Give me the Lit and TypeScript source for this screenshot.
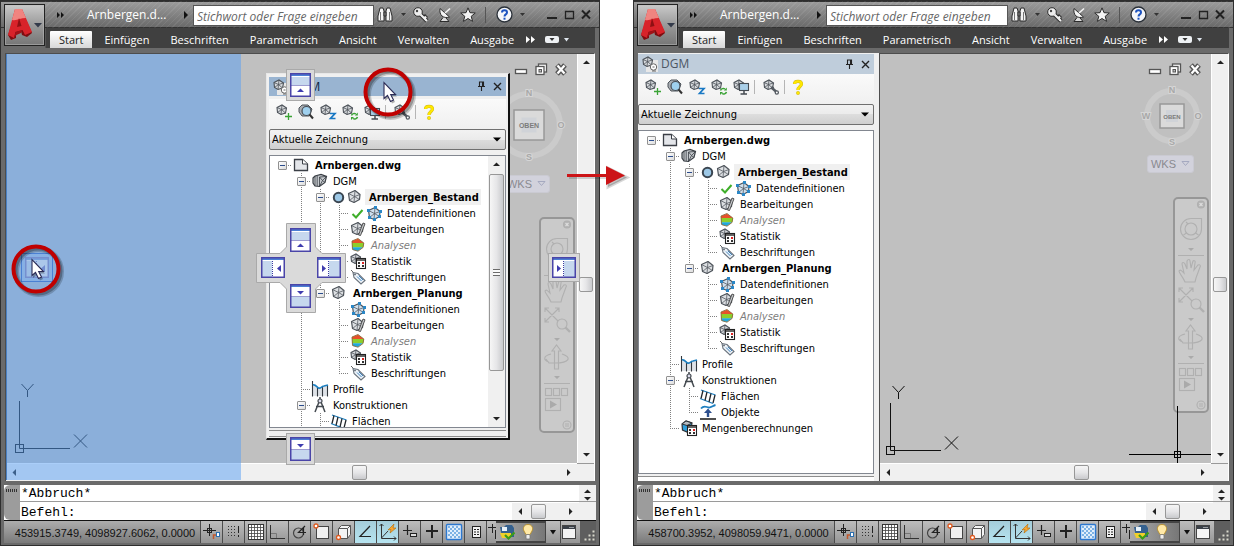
import { LitElement, html, svg, css, nothing } from "lit";
import { customElement, property } from "lit/decorators.js";
import { classMap } from "lit/directives/class-map.js";

/* ---------- icons ---------- */

const svgBox = (w: number, h: number, body: unknown) =>
  html`<svg width=${w} height=${h} viewBox="0 0 ${w} ${h}" aria-hidden="true">${body}</svg>`;

const meshShape = (fill = "#dcdfe2") => svg`
  <path d="M1.5 4.5 L8 1.5 L13 5.5 L12.5 10.5 L7 13.5 L2.5 11.5 Z" fill=${fill} stroke="#4c5259" stroke-width="1.2" stroke-linejoin="round"/>
  <path d="M1.5 4.5 L7.5 7.5 L13 5.5 M8 1.5 L7.5 7.5 L7 13.5 M7.5 7.5 L2.5 11.5 M7.5 7.5 L12.5 10.5" fill="none" stroke="#555b62" stroke-width=".8"/>`;

const smallMesh = svg`
  <path d="M1 3.5 L6 1 L10.5 4 L9.5 9 L5 10.5 L1.5 8.5 Z" fill="#d8dbde" stroke="#4c5259" stroke-width="1.1"/>
  <path d="M1 3.5 L5.5 5.5 L10.5 4 M6 1 L5.5 5.5 L5 10.5 M5.5 5.5 L1.5 8.5 M5.5 5.5 L9.5 9" fill="none" stroke="#4c5259" stroke-width=".8"/>`;

const calcShape = svg`
  <rect x="6.5" y="5.5" width="9" height="10" fill="#fff" stroke="#222" stroke-width="1.1"/>
  <path d="M6.5 7 H15.5" stroke="#222" stroke-width="1.4"/>
  <path d="M8 9 h2 v2 h-2z M8 12 h2 v2 h-2z M12 12 h2 v2 h-2z" fill="#333"/>
  <rect x="12" y="9" width="2" height="2" fill="#d22"/>`;

const treeIcons: Record<string, unknown> = {
  file: svg`<path d="M1.5 2.5 H9.5 L14.5 7 V13.5 H1.5 Z" fill="#e4e6ea" stroke="#3b3f46" stroke-width="1.3"/><path d="M9.5 2.5 V7 H14.5" fill="#fff" stroke="#3b3f46"/>`,
  dgm: svg`<path d="M1 5 L3 3 L9 1.5 L14.5 3.5 L13 9.5 L7.5 13.5 L3 13 L1 10 Z" fill="#c6cace" stroke="#3a3f45" stroke-width="1.2"/>
    <path d="M3 3 V13 M5.2 3 V13 M7.5 4 L14.5 3.5 M7.5 4 L7.5 13.5 M7.5 4 L10.5 7.5 L14.5 3.5 M10.5 7.5 L7.5 13.5 M10.5 7.5 L13 9.5" fill="none" stroke="#3a3f45" stroke-width=".8"/>`,
  mesh: svg`${meshShape()}`,
  data: svg`<g transform="translate(1 1)">${meshShape("#cfe0ee")}</g>
    <path d="M1 4h3v3H1z M8 1h3v3H8z M13 5h3v3h-3z M2 11h3v3H2z M7 13h3v3H7z M12 10h3v3h-3z" fill="#2b87c6"/>`,
  edit: svg`${meshShape()}<path d="M8.5 14 L13 2 L15 2.8 L10.5 14.5 Z" fill="#c6c9cc" stroke="#444" stroke-width=".9"/>`,
  analyse: svg`<path d="M2 4 L8 1.8 L14 6 H2 Z" fill="#e8502a"/><path d="M2 6 H14 V8 L13 10.5 H2 Z" fill="#8ccf2c"/><path d="M2 10.2 H13 L8 14 L3 13 Z" fill="#20a8dc"/>
    <path d="M2 4 L8 1.5 L13.8 6 L13 10.5 L8 14.2 L2.5 12.5 Z" fill="none" stroke="#8a6a3c" stroke-width=".9"/>`,
  stat: svg`${smallMesh}${calcShape}`,
  tag: svg`<path d="M1 1 L4 4" stroke="#666"/><path d="M3 3.5 L8 4.5 L15 11.5 L11 15 L4 8.5 Z" fill="#eef3f8" stroke="#6a737d" stroke-width="1.1"/>
    <path d="M7 7.5 L11.5 12 M8.8 6.8 L13 11" stroke="#3d83bf" stroke-width="1"/><circle cx="5" cy="5.4" r=".9" fill="#59636e"/>`,
  profile: svg`<path d="M1 3 V15 H16 V4 L12 5 L9 7 L5 6 Z" fill="#dfe3e8"/><path d="M.5 0 V15.5 M5.5 6 V15.5 M10.5 6 V15.5 M15.5 4 V15.5" stroke="#33383e" stroke-width="1.1"/>
    <path d="M1 4 C3 3 5 6 6.5 7 C8.5 8 10 5 12 5 L16 4" fill="none" stroke="#1d7fc0" stroke-width="1.6"/>`,
  konstr: svg`<path d="M8 0 V3 M7 5 L3 15 M9 5 L13 15 M4 9.5 H12" fill="none" stroke="#444a50" stroke-width="1.5"/><circle cx="8" cy="4" r="2" fill="#dde" stroke="#444a50" stroke-width="1.2"/>`,
  area: svg`<path d="M1 2 L15.5 7 M0 10.5 L13 15.5" stroke="#1d7fc0" stroke-width="1.3"/><path d="M3 2.5 L1 10.5 M7 4 L5 12.5 M11 5.5 L9 14 M15 7 L13 15" stroke="#22272c" stroke-width="1.3"/>`,
  object: svg`<path d="M1 4.5 C4 1 6 3 8.5 3.5 C11 4 13 1.5 15.5 1" fill="none" stroke="#1d7fc0" stroke-width="1.8"/>
    <path d="M8 4.5 L12 9 H9.2 V13 H6.8 V9 H4 Z" fill="#2d4f8e"/><path d="M0 15 H16" stroke="#222" stroke-width="1.6"/>`,
  volume: svg`<path d="M1 4 L5 1 L11 3 L10 9 L6 12 L1.5 10 Z" fill="#2f9fdc" stroke="#2e3338" stroke-width="1.2"/><path d="M1 4 L6 5.5 L11 3 L5 1 Z" fill="#b7bbc0" stroke="#2e3338"/>${calcShape}`,
};

const tool: Record<string, unknown> = {
  add: svg`${smallMesh}<path d="M12.5 9 V16 M9 12.5 H16" stroke="#3aa335" stroke-width="1.3"/>`,
  find: svg`<path d="M1 4 L4 1 L10 1 L14 5 L11 12 L4 12 L1 8 Z" fill="#a9adb2" stroke="#4c5259"/><circle cx="8.5" cy="7" r="4.5" fill="#9fd0ee" stroke="#454b52" stroke-width="1.2"/><path d="M11.5 10.5 L15 14.5" stroke="#333" stroke-width="2"/>`,
  zoomz: svg`${smallMesh}<path d="M10 9.5 H15 L10.5 14.5 H15.5" fill="none" stroke="#1878c4" stroke-width="1.7"/>`,
  refresh: svg`${smallMesh}<path d="M9.5 11.5 A3 3 0 0 1 14 10 M15.5 13 A3 3 0 0 1 11 14.5" fill="none" stroke="#3aa335" stroke-width="1.5"/><path d="M15.8 8.5 V11.5 H12.8Z M9 16 V13 H12Z" fill="#3aa335"/>`,
  screen: svg`${smallMesh}<rect x="6.5" y="4.5" width="9" height="7" fill="#a9cfe8" stroke="#454b52" stroke-width="1.1"/><path d="M11 12 V14.5 M7.5 15 H14" stroke="#454b52" stroke-width="1.5"/>`,
  wrench: svg`${smallMesh}<path d="M9 9 L13.5 13" stroke="#555b62" stroke-width="2.4"/><circle cx="13.8" cy="13.5" r="1.6" fill="#fff" stroke="#555b62" stroke-width="1.3"/><circle cx="9.5" cy="8.8" r="1.6" fill="#555b62"/>`,
  help: svg`<path d="M4.5 5 C4.5 1.5 11.5 1.5 11.5 5 C11.5 7.5 8 7.5 8 11" fill="none" stroke="#c9b21a" stroke-width="3.2"/><path d="M4.5 5 C4.5 1.5 11.5 1.5 11.5 5 C11.5 7.5 8 7.5 8 11" fill="none" stroke="#ffe800" stroke-width="2.4"/><circle cx="8" cy="14" r="1.7" fill="#ffe800" stroke="#c9b21a" stroke-width=".5"/>`,
};

const arrowTri = (dir: string, color = "#222") => {
  const d = { up: "M0 5 L3.5 1.5 L7 5Z", down: "M0 2 L7 2 L3.5 5.5Z", left: "M5 0 L1.5 3.5 L5 7Z", right: "M2 0 L5.5 3.5 L2 7Z" }[dir];
  return svgBox(7, 7, svg`<path d=${d} fill=${color}/>`);
};

/* ---------- tree model ---------- */

interface Row {
  cells: string[];
  icon: string;
  text: string;
  kind?: "bold" | "italic";
  lead?: "radio" | "check";
  selected?: boolean;
}

const leaves = (guide: string, checked: boolean): Row[] => {
  const items: [string, string][] = [
    ["data", "Datendefinitionen"],
    ["edit", "Bearbeitungen"],
    ["analyse", "Analysen"],
    ["stat", "Statistik"],
    ["tag", "Beschriftungen"],
  ];
  return items.map(([icon, text], i) => ({
    cells: ["", "v", guide, i === items.length - 1 ? "elbow" : "tee"],
    icon,
    text,
    kind: icon === "analyse" ? "italic" : undefined,
    lead: checked && i === 0 ? "check" : undefined,
  }));
};

const ROWS: Row[] = [
  { cells: ["root open"], icon: "file", text: "Arnbergen.dwg", kind: "bold" },
  { cells: ["", "tee open"], icon: "dgm", text: "DGM" },
  { cells: ["", "v", "tee open"], icon: "mesh", text: "Arnbergen_Bestand", kind: "bold", lead: "radio", selected: true },
  ...leaves("v", true),
  { cells: ["", "v", "elbow open"], icon: "mesh", text: "Arnbergen_Planung", kind: "bold" },
  ...leaves("", false),
  { cells: ["", "tee"], icon: "profile", text: "Profile" },
  { cells: ["", "tee open"], icon: "konstr", text: "Konstruktionen" },
  { cells: ["", "v", "tee"], icon: "area", text: "Flächen" },
  { cells: ["", "v", "elbow"], icon: "object", text: "Objekte" },
  { cells: ["", "elbow"], icon: "volume", text: "Mengenberechnungen" },
];

/* Rows that fit in the floating palette's viewport. */
const FLOATING_ROWS = 17;

const reset = css`
  *, *::before, *::after { box-sizing: border-box; }
  button { font: inherit; color: inherit; background: none; border: 0; padding: 0; margin: 0; display: flex; align-items: center; justify-content: center; }
  svg { display: block; flex: none; overflow: visible; }
`;

/* ---------- scroll bar ---------- */

@customElement("scroll-bar")
class ScrollBar extends LitElement {
  @property({ reflect: true }) orient = "vertical";
  @property({ type: Boolean }) grip = false;
  static styles = [reset, css`
    :host { display: grid; background: #f0f0f0; min-width: 0; min-height: 0; }
    :host([orient="vertical"]) { grid-template-rows: 17px var(--before, 1fr) var(--thumb, 15px) var(--after, 1fr) 17px; width: 17px; }
    :host([orient="horizontal"]) { grid-template-columns: 17px var(--before, 1fr) var(--thumb, 15px) var(--after, 1fr) 17px; height: 17px; }
    .thumb { border: 1px solid #979797; border-radius: 2px; display: grid; place-items: center; }
    :host([orient="vertical"]) .thumb { background: linear-gradient(90deg, #f6f6f6, #e6e6e8 50%, #c9cacd); margin: 0 1px; }
    :host([orient="horizontal"]) .thumb { background: linear-gradient(#f6f6f6, #e6e6e8 50%, #c9cacd); margin: 1px 0; }
    .lines { width: 7px; height: 7px; background: repeating-linear-gradient(#6b6b6b 0 1px, #fafafa 1px 3px); }
  `];
  render() {
    const v = this.orient === "vertical";
    return html`
      <button aria-label="Zurück">${arrowTri(v ? "up" : "left")}</button><span></span>
      <div class="thumb">${this.grip ? html`<div class="lines"></div>` : nothing}</div><span></span>
      <button aria-label="Weiter">${arrowTri(v ? "down" : "right")}</button>`;
  }
}

/* ---------- palette ---------- */

@customElement("dgm-palette")
class DgmPalette extends LitElement {
  @property({ type: Boolean, reflect: true }) floating = false;
  static styles = [reset, css`
    :host { display: flex; flex-direction: column; min-height: 0; background: #f0f0f0; font: 11px/16px "DejaVu Sans Condensed", "DejaVu Sans", sans-serif; color: #000; }
    header { display: flex; align-items: center; height: 20px; background: #bfcddb; color: #4c5664; padding: 0 1px 0 4px; font: 12px/18px "Open Sans", sans-serif; }
    header .name { flex: 1; padding-left: 3px; }
    header button { width: 16px; height: 17px; }
    .tools { display: flex; align-items: center; height: 30px; padding: 0 0 4px 7px; gap: 6px; background: linear-gradient(#fafafa, #f0f0f0); }
    .tools button { width: 16px; height: 16px; }
    .tools i { width: 1px; height: 14px; background: #b5b5b5; margin: 0 -1px; }
    .tools i + button { margin-left: 3px; }
    .tools button:last-child { margin-left: 0; }
    .pick { display: grid; height: 21px; align-items: center; margin-bottom: 5px; }
    .pick > * { grid-area: 1 / 1; }
    select { appearance: none; width: 100%; height: 21px; font: inherit; color: inherit; padding: 1px 20px 0 2px; margin: 0; border: 1px solid #707070; border-radius: 2px; background: linear-gradient(#f2f2f2, #ebebeb 50%, #dddddd 50%, #cfcfcf); }
    .pick span { justify-self: end; padding-right: 5px; pointer-events: none; }
    .box { flex: 1; min-height: 0; display: flex; background: #fff; border: 1px solid #828790; overflow: hidden; }
    ul { list-style: none; margin: 0; padding: 1px 0 0 3px; flex: 1; min-width: 0; }
    li { display: flex; height: 16px; align-items: center; white-space: nowrap; }
    .cell { flex: none; width: 19px; height: 16px; display: grid; place-items: center start; padding-left: 5px;
      --v: repeating-linear-gradient(#808080 0 1px, transparent 1px 2px); --h: repeating-linear-gradient(90deg, #808080 0 1px, transparent 1px 2px); background-repeat: no-repeat; }
    .v { background-image: var(--v); background-size: 1px 16px; background-position: 9px 0; }
    .tee { background-image: var(--v), var(--h); background-size: 1px 16px, 10px 1px; background-position: 9px 0, 9px 8px; }
    .elbow { background-image: var(--v), var(--h); background-size: 1px 8px, 10px 1px; background-position: 9px 0, 9px 8px; }
    .root { background-image: var(--h); background-size: 10px 1px; background-position: 9px 8px; }
    .toggle { width: 9px; height: 9px; border: 1px solid #919191; border-radius: 1px; background: linear-gradient(135deg, #fff, #dcdcdc); }
    .toggle::before { content: ""; width: 5px; height: 1px; background: #2b4c8c; }
    .icon { margin-left: 1px; }
    .label { height: 16px; margin-left: 2px; padding: 1px 2px 0 3px; line-height: 15px; }
    .lead { margin: 0 1px 0 2px; }
    .bold { font-weight: 700; padding-left: 4px; }
    .italic { font-style: italic; color: #7d7d7d; }
    .selected { background: #f0f0f0; }
    scroll-bar { --before: 1px; --thumb: 197px; --after: 1fr; }
    .foot { flex: none; height: 5px; border-top: 1px solid #8d8d8d; background: #fdfdfd; margin-top: 2px; }
    :host([floating]) { border: solid; border-width: 1px 2px 2px 1px; border-color: #e8e8e8 #111 #111 #e8e8e8; padding: 3px 2px 1px; }
    :host([floating]) header { background: #99b4d1; color: #10233c; height: 19px; margin-bottom: 3px; }
    :host([floating]) .foot { height: 7px; background: #f0f0f0; border: solid #8d8d8d; border-width: 1px 0; }
  `];
  private row(r: Row) {
    return html`<li role="treeitem">
      ${r.cells.map((c) => html`<span class="cell ${c.replace("open", "")}">${c.includes("open") ? html`<button class="toggle" aria-label="Zuklappen"></button>` : nothing}</span>`)}
      ${r.lead === "radio" ? html`<span class="lead">${svgBox(13, 13, svg`<circle cx="6.5" cy="6.5" r="4.7" fill="#9dc8e6" stroke="#3b4651" stroke-width="2"/>`)}</span>` : nothing}
      ${r.lead === "check" ? html`<span class="lead">${svgBox(13, 13, svg`<path d="M1.5 7 L5 10.5 L11.5 3" fill="none" stroke="#3fae2a" stroke-width="2"/>`)}</span>` : nothing}
      <span class="icon">${svgBox(16, 16, treeIcons[r.icon])}</span>
      <span class=${classMap({ label: true, bold: r.kind === "bold", italic: r.kind === "italic", selected: !!r.selected })}>${r.text}</span>
    </li>`;
  }
  render() {
    const t = (k: string, name: string) => html`<button aria-label=${name}>${svgBox(16, 16, tool[k])}</button>`;
    const rows = this.floating ? ROWS.slice(0, FLOATING_ROWS) : ROWS;
    return html`
      <header>
        ${svgBox(16, 16, svg`<rect x="4" y="4" width="12" height="12" fill="#e8e8e8"/>${smallMesh}<circle cx="11.5" cy="11" r="3.2" fill="#fff" stroke="#666"/><path d="M10 15 h4 M10.5 11 h2" stroke="#666"/>`)}
        <span class="name">DGM</span>
        <button aria-label="Anheften">${svgBox(9, 11, svg`<path d="M2.5 5.5 V1 H6.5 V5.5 M5.5 1 V5.5 M1 5.5 H8 M4.5 6 V10" fill="none" stroke="#222" stroke-width="1.1"/>`)}</button>
        <button aria-label="Schließen">${svgBox(9, 9, svg`<path d="M1 1 L8 8 M8 1 L1 8" stroke="#222" stroke-width="1.4"/>`)}</button>
      </header>
      <div class="tools">
        ${t("add", "Neu")}${t("find", "Suchen")}${t("zoomz", "Zoom")}${t("refresh", "Aktualisieren")}${t("screen", "Anzeigen")}<i></i>${t("wrench", "Einstellungen")}<i></i>${t("help", "Hilfe")}
      </div>
      <div class="pick">
        <select aria-label="Zeichnung"><option>Aktuelle Zeichnung</option></select>
        <span>${svgBox(8, 5, svg`<path d="M0 .5 H8 L4 4.5Z" fill="#000"/>`)}</span>
      </div>
      <div class="box">
        <ul role="tree">${rows.map((r) => this.row(r))}</ul>
        ${this.floating ? html`<scroll-bar grip></scroll-bar>` : nothing}
      </div>
      <div class="foot"></div>`;
  }
}

/* ---------- application window ---------- */

const statusIcons = [
  svg`<path d="M8.5 3 V15 M2 9.5 H15" stroke="#222"/><rect x="6.5" y="7.5" width="4" height="4" fill="none" stroke="#222"/><path d="M12.5 18 V14 H15" fill="none" stroke="#c1572b" stroke-width="1.5"/><rect x="15.5" y="11.5" width="3" height="4" fill="#fff" stroke="#2b6fb0"/>`,
  svg`<path d="M5 5.5h9 M5 8.5h9 M5 11.5h9 M5 14.5h9" stroke="#333" stroke-dasharray="1 2"/><path d="M15.5 5 V12 M15.5 14 V16" stroke="#222"/>`,
  svg`<rect x="3.5" y="3.5" width="15" height="15" fill="#fff" stroke="#333"/><path d="M6.5 4v14 M9.5 4v14 M12.5 4v14 M15.5 4v14 M4 6.5h14 M4 9.5h14 M4 12.5h14 M4 15.5h14" stroke="#444" stroke-width=".8"/>`,
  svg`<path d="M3.5 4 V17.5 H18" fill="none" stroke="#333"/><path d="M4 12.5 H9.5 V17" fill="none" stroke="#777"/>`,
  svg`<circle cx="9.5" cy="12" r="5" fill="none" stroke="#444" stroke-width="1.2"/><path d="M16 5 L9.5 11.5 H17 M14.5 7 V14" fill="none" stroke="#222" stroke-width="1.2"/>`,
  svg`<rect x="5.5" y="5.5" width="12" height="12" fill="#f1f1f1" stroke="#444"/><circle cx="5" cy="5" r="2" fill="#fff" stroke="#e05a1f" stroke-width="1.3"/>`,
  svg`<path d="M5.5 7.5 L8.5 4.5 H17.5 V13.5 L14.5 17.5 H5.5 Z" fill="#f4f4f4" stroke="#555"/><path d="M5.5 7.5 H14.5 V17.5 M14.5 7.5 L17.5 4.5" fill="none" stroke="#555"/><circle cx="5.5" cy="16.5" r="2" fill="#fff" stroke="#e05a1f" stroke-width="1.3"/>`,
  svg`<path d="M15 5 L5 15.5 H16" fill="none" stroke="#222" stroke-width="1.2"/>`,
  svg`<path d="M4.5 3 V17.5 H19 M4.5 17 L11 10 M2.5 5 L4.5 3 L6.5 5 M17 15.5 L19 17.5 L17 19.5" fill="none" stroke="#333"/><path d="M11 9 L17 3 L16 7 L19 7 L13 12 L14 8.5Z" fill="#f7a531" stroke="#b66a00" stroke-width=".6"/>`,
  svg`<path d="M8.5 4 V14 M4 9.5 H13" stroke="#222" stroke-width="1.2"/><rect x="11.5" y="12.5" width="6" height="3" fill="#ddd" stroke="#222"/>`,
  svg`<path d="M11 4 V17 M5 10 H17" stroke="#222" stroke-width="2"/>`,
  svg`<rect x="3.5" y="3.5" width="15" height="15" rx="1" fill="#e2effc" stroke="#2c78d0" stroke-width="1.4"/><path d="M5 6h12 M5 10h12 M5 14h12" stroke="#7db2e4" stroke-width="2" stroke-dasharray="2 2"/><path d="M7 8h10 M7 12h10 M7 16h10" stroke="#7db2e4" stroke-width="2" stroke-dasharray="2 2"/>`,
  svg`<rect x="7.5" y="5.5" width="8" height="11" fill="#f2f2f2" stroke="#222"/><path d="M9 8.5h2 M9 11h2 M9 13.5h2 M12 8.5h2 M12 11h2 M12 13.5h2" stroke="#222"/>`,
];

const TABS = ["Start", "Einfügen", "Beschriften", "Parametrisch", "Ansicht", "Verwalten", "Ausgabe"];

@customElement("cad-window")
class CadWindow extends LitElement {
  @property({ type: Boolean, reflect: true }) docked = false;
  @property() coords = "";
  static styles = [reset, css`
    :host { position: relative; display: grid; grid-template-rows: 47px 1fr 35px 23px; min-width: 0; border: 1px solid #2e2e2e; background: #6a6a6a; padding-bottom: 2px; font: 11px/16px "Open Sans", sans-serif; }
    .top { display: grid; grid-template: 27px 20px / 44px 1fr; background: linear-gradient(#333 0 1px, #9b9b9b 1px, #6a6a6a 26px, #333 26px 27px, #6a6a6a 27px); }
    .app { grid-row: 1 / 3; margin: 3px 0 2px 3px; width: 41px; border: 1px solid #222; background: linear-gradient(#c9c9c9, #9a9a9a 50%, #767676); box-shadow: inset 0 0 0 1px #bdbdbd80; gap: 2px; }
    .title { display: flex; align-items: center; padding: 0 7px 0 12px; color: #fff; min-width: 0; background: repeating-linear-gradient(135deg, #ffffff12 0 1px, transparent 1px 4px); }
    .name { width: 77px; margin-left: 23px; white-space: nowrap; font-size: 12px; }
    .play { margin: 0 5px 0 20px; }
    input { flex: 1; min-width: 0; height: 21px; margin: 1px 2px 0 0; padding: 3px 0 0 3px; border: 1px solid #555; background: #fff; font: italic 12px/16px "Open Sans", sans-serif; color: #555; }
    input::placeholder { color: #666; opacity: 1; }
    .title button { height: 20px; }
    .binoc { width: 18px; } .caret { width: 19px; } .key { width: 16px; } .dish { width: 16px; margin: 0 7px 0 8px; } .star { width: 16px; }
    .sep { width: 1px; height: 16px; background: #555; margin: 0 9px; }
    .help { width: 18px; } .mini { width: 12px; margin-left: 5px; } .title .first { margin-left: 14px; }
    nav { display: flex; align-items: end; background: #404040; margin-right: 4px; padding-left: 4px; color: #fff; min-width: 0; overflow: hidden; border-left: 1px solid #555; }
    nav a { color: inherit; text-decoration: none; height: 17px; line-height: 17px; padding: 0 10px; margin-right: 1px; white-space: nowrap; }
    nav a.on { background: linear-gradient(#fff, #d8d8d8); color: #222; padding: 0 9px; margin-right: 2px; border-radius: 1px 1px 0 0; }
    nav button { height: 17px; }
    nav .more { margin: 0 10px 0 1px; } nav .pill { margin-right: 5px; }

    .doc { display: grid; grid-template-columns: 1fr; margin: 5px 4px 4px; min-height: 0; background: #f0f0f0; }
    :host([docked]) .doc { grid-template-columns: 241px 1fr; }
    dgm-palette.side { padding: 1px 5px 0 0; }
    .view { display: grid; grid-template: 1fr 18px / 1fr 17px; border: solid #4d4d4d; border-width: 1px 0 0 1px; border-right: 1px solid #fff; min-width: 0; }
    .canvas { position: relative; background: #c0c0c0; overflow: hidden; }
    .view scroll-bar { border: 0 solid #fff; }
    .view scroll-bar[orient="vertical"] { --before: 207fr; --after: 154fr; border-left-width: 1px; }
    .view scroll-bar[orient="horizontal"] { --before: 330fr; --after: 193fr; height: 18px; border-top-width: 1px; }
    :host([docked]) .view scroll-bar[orient="horizontal"] { --before: 176fr; --after: 105fr; }
    .corner { border-top: 1px solid #999; }

    .mdi { position: absolute; right: 10px; top: 9px; display: flex; gap: 7px; }
    .compass { position: absolute; right: 8px; top: 31px; }
    .ucs { position: absolute; left: 8px; bottom: 8px; }
    .wks { position: absolute; right: 27px; top: 121px; width: 47px; height: 18px; border-radius: 3px; background: #d2d2dc; border: 1px solid #cacad2; color: #8a8a90; font: 11px/16px "Liberation Sans", sans-serif; gap: 5px; }
    .bar { position: absolute; right: 2px; top: 163px; }
    .cross { position: absolute; right: 0; bottom: 0; }
    :host([docked]) .compass { right: 7px; top: 30px; }
    :host([docked]) .wks { right: 17px; top: 101px; }
    :host([docked]) .bar { top: 143px; }
    :host([docked]) .ucs { left: 5px; bottom: 6px; }

    .cmd { display: grid; grid-template: 17px 18px / 16px 1fr 67px 17px; margin: 0 3px; background: #fff; font: 13px/17px "Liberation Mono", monospace; color: #000; }
    .grip { grid-row: 1 / 3; background: #9c9c9c; border-radius: 6px 0 0 6px; padding: 4px 0 0 2px; }
    .dots { width: 12px; height: 3px; background: repeating-linear-gradient(90deg, #333 0 1px, transparent 1px 2px); }
    .line { padding-left: 1px; line-height: 21px; }
    .line.first { grid-column: 2 / 4; border-bottom: 1px solid #9a9a9a; line-height: 17px; }
    .spin { background: #f0f0f0; display: flex; flex-direction: column; align-items: center; justify-content: space-between; padding: 3px 0 0; overflow: hidden; border-bottom: 1px solid #9a9a9a; }
    .cmd scroll-bar { height: 17px; margin-top: 1px; --before: 2px; --thumb: 15px; --after: 1fr; }
    .rest { background: #f0f0f0; }

    .status { display: flex; margin: 0 3px; border-top: 1px solid #111; background: linear-gradient(#adadad, #7a7a7a); color: #111; font: 11px/24px "Liberation Sans", sans-serif; min-width: 0; overflow: hidden; }
    .coord { flex: 1; min-width: 0; text-align: center; padding-left: 6px; white-space: nowrap; }
    .status button { width: 22px; height: 22px; border-left: 1px solid #4c4c4c; background: linear-gradient(#bdbdbd, #969696); flex: none; }
    .status button.on { background: linear-gradient(#a5cdda, #b6e4f0); }
    .status .cut { width: 10px; overflow: hidden; justify-content: start; }
    .tray { width: 50px; display: flex; align-items: center; padding-left: 3px; gap: 7px; background: linear-gradient(90deg, #aaa, #777); border: solid #444; border-width: 2px 1px 2px 0; }
    .status .drop { width: 14px; border-left: 0; } .status .win { width: 20px; padding-right: 3px; }
    .corner-grip { width: 16px; background: #5e5e5e; display: flex; align-items: end; justify-content: end; padding: 0 1px 2px 0; }
  `];

  private viewTools() {
    const r = this.docked ? 26 : 32, c = this.docked ? 32 : 40, b = this.docked ? 24 : 30;
    const letter = (x: number, y: number, t: string) => svg`<text x=${x} y=${y + 3} text-anchor="middle" font-family="Liberation Sans" font-size="9" font-weight="700" fill="#a8a8a8" stroke="#d6d6d6" stroke-width="2" paint-order="stroke">${t}</text>`;
    return html`
      <div class="mdi">
        ${svgBox(14, 13, svg`<rect x="1.5" y="6.5" width="11" height="4" fill="#fff" stroke="#555" stroke-width="1.3"/>`)}
        ${svgBox(13, 13, svg`<rect x="3.5" y="1" width="8" height="8" fill="#fff" stroke="#555" stroke-width="1.3"/><rect x="1" y="3.5" width="8" height="8" fill="#fff" stroke="#555" stroke-width="1.3"/><rect x="4" y="6.5" width="2.5" height="2.5" fill="#c0c0c0" stroke="#555"/>`)}
        ${svgBox(12, 13, svg`<path d="M2 2 L10 11 M10 2 L2 11" stroke="#555" stroke-width="5"/><path d="M2.5 2.5 L9.5 10.5 M9.5 2.5 L2.5 10.5" stroke="#fff" stroke-width="2.2"/>`)}
      </div>
      <div class="compass">${svgBox(c * 2, c * 2, svg`
        <circle cx=${c} cy=${c} r=${r - 1} fill="none" stroke="#cbcbcb" stroke-width="6"/>
        ${letter(c, c - r, "N")}${letter(c + r, c, "O")}${letter(c, c + r, "S")}${letter(c - r, c, "W")}
        <rect x=${c - b / 2} y=${c - b / 2} width=${b} height=${b} fill="#dadada" stroke="#989898" stroke-width="1.5"/>
        <rect x=${c - b / 4} y=${c - b / 4} width=${b / 2} height=${b / 2} fill="#d0d3d8"/>
        <text x=${c} y=${c + 3} text-anchor="middle" font-family="Liberation Sans" font-size=${this.docked ? 6 : 7} font-weight="700" fill="#7c7c7c">OBEN</text>`)}</div>
      <button class="wks">WKS ${svgBox(9, 6, svg`<path d="M1 .5 H8 L4.5 4.5Z" fill="none" stroke="#a5a9c0"/>`)}</button>
      <div class="bar">${svgBox(36, 216, svg`
        <rect x="1" y="1" width="34" height="214" rx="4" fill="#cacaca" stroke="#979797" stroke-width="2"/>
        <g fill="none" stroke="#b0b0b0" stroke-width="1.1">
          <circle cx="28" cy="7.5" r="3.5" fill="#b4b4b4"/><path d="M26.5 6 l3 3 m0 -3 l-3 3" stroke="#ddd"/>
          <path d="M18 21.5 H28.5 V32 A10.5 10.5 0 1 1 18 21.5Z"/><circle cx="18" cy="32" r="6"/><path d="M10.5 38 l3-2 M22.5 36 l3 2 M13 25 l2 2"/>
          <path d="M5 58.5 H31 M5 166.5 H31"/>
          <path d="M12 85 C10 80 6 76 6 74 C7 72 9 74 11 76 L9 67 C9 65 11 65 12 67 L14 72 L14 64 C15 62 17 62 17 64 L18 71 L20 64 C21 63 23 64 22 66 L21 73 L25 68 C27 67 28 69 27 70 L23 81 L22 85Z"/>
          <path d="M6 91 L20 105 M20 91 L6 105 M6 95 V91 H10 M16 91 H20 V95 M6 101 V105 H10"/><circle cx="23" cy="107" r="5" fill="#cacaca"/><path d="M26.5 110.5 L31 115" stroke-width="2.4"/>
          <path d="M15.5 152 V134 H13 L17.5 128 L22 134 H19.5 V152Z"/><path d="M12 137 C4 139 4 143 10 145 M23 137 C33 140 31 146 16 146 M7 142 L10 146 L15 146"/>
          <rect x="6.5" y="171.5" width="6" height="7"/><rect x="14.5" y="171.5" width="6" height="7"/><rect x="22.5" y="171.5" width="6" height="7"/>
          <rect x="6.5" y="181.5" width="15" height="12"/><circle cx="28" cy="208" r="4"/><path d="M26 207h4 M26 209h4"/>
        </g>
        <path d="M15 51 h6 l-3 3z M15 121 h6 l-3 3z M15 159 h6 l-3 3z M11 183.5 L18 187.5 L11 191.5Z" fill="#aaa"/>`)}</div>
      <div class="ucs">${svgBox(76, 74, svg`<g fill="none" stroke="#111" stroke-width="1">
        <path d="M5.5 20 V67.5 H56"/><rect x="1.5" y="63.5" width="8" height="8"/><path d="M7.5 3 L13.5 9.5 L19.5 3 M13.5 9.5 V16 M60 53.5 L73 66.5 M73 53.5 L60 66.5"/></g>`)}</div>
      ${this.docked ? html`<div class="cross">${svgBox(82, 57, svg`<path d="M48.5 0 V57 M0 48.5 H82" stroke="#000"/><rect x="45.5" y="45.5" width="6" height="6" fill="none" stroke="#000"/>`)}</div>` : nothing}`;
  }

  render() {
    return html`
      <div class="top">
        <button class="app" aria-label="Anwendungsmenü">
          ${svgBox(25, 34, svg`<path d="M4 32 L1 27 L9 3 L15 3 L25 25 L20 29 L15 27 L14 23 L9 26 L9 30 Z" fill="#7d0d10"/>
            <path d="M1 27 L8 1 H15 L25 24 L18 27 L15.5 22 L8.5 24 L7 30 Z" fill="#d8232a"/><path d="M8 1 H15 L19 10 C13 10 10 13 5 12 Z" fill="#f08480"/><path d="M12 10 L14.5 18 L10 19 Z" fill="#8e1013"/><path d="M7 30 L8.5 24 L15.5 22 L14 25 L9.5 27 Z" fill="#a01217"/>`)}
          ${svgBox(8, 5, svg`<path d="M0 0 H8 L4 4.5Z" fill="#333a4a"/>`)}
        </button>
        <div class="title">
          ${svgBox(7, 6, svg`<path d="M0 0 L3 3 L0 6Z M4 0 L7 3 L4 6Z" fill="#111"/>`)}
          <span class="name">Arnbergen.d...</span>
          <span class="play">${svgBox(4, 8, svg`<path d="M0 0 L4 4 L0 8Z" fill="#111"/>`)}</span>
          <input aria-label="Suche" placeholder="Stichwort oder Frage eingeben">
          <button class="binoc" aria-label="Suchen">${svgBox(16, 15, svg`<path d="M3 1 H6 L7 4 V14 H1 V9 Z M10 1 H13 L15 9 V14 H9 V4 Z M7 5 H9 V9 H7Z" fill="#f4f4f4" stroke="#2c2c2c"/><path d="M3.5 5 V13 M12.5 5 V13" stroke="#777"/>`)}</button>
          <button class="caret" aria-label="Mehr">${svgBox(5, 3, svg`<path d="M0 0 H5 L2.5 3Z" fill="#333"/>`)}</button>
          <button class="key" aria-label="Subscription">${svgBox(16, 16, svg`<path d="M7.5 7.5 L14 14 M11 11 L13.5 8.5" stroke="#2c2c2c" stroke-width="4.2"/><circle cx="5" cy="5" r="4.3" fill="#eee" stroke="#2c2c2c"/><path d="M7.5 7.5 L14 14 M11.5 11.5 L13 9.5" stroke="#f2f2f2" stroke-width="2.2"/><circle cx="4" cy="4" r="1.2" fill="#444"/>`)}</button>
          <button class="dish" aria-label="Kommunikation">${svgBox(14, 16, svg`<path d="M2 1.5 C1 8 5 12 11.5 10 Z" fill="#f4f4f4" stroke="#2c2c2c"/><path d="M7 6 L12 1.5" stroke="#f4f4f4" stroke-width="1.6"/><path d="M5 10.5 L2 14.5 H11 L8 11" fill="#ddd" stroke="#2c2c2c"/>`)}</button>
          <button class="star" aria-label="Favoriten">${svgBox(16, 15, svg`<path d="M8 .8 L10 5.7 L15.3 6 L11.2 9.3 L12.6 14.4 L8 11.5 L3.4 14.4 L4.8 9.3 L.7 6 L6 5.7Z" fill="#f4f4f4" stroke="#2c2c2c"/>`)}</button>
          <span class="sep"></span>
          <button class="help" aria-label="Hilfe">${svgBox(17, 17, svg`<circle cx="8.5" cy="8.5" r="7.5" fill="#f4f6fa" stroke="#2a3038" stroke-width="1.3"/><path d="M6 6.5 C6 3.5 11 3.5 11 6.5 C11 8.5 8.5 8.3 8.5 10.5" fill="none" stroke="#1d53c0" stroke-width="2"/><rect x="7.5" y="11.7" width="2" height="2" fill="#1d53c0"/>`)}</button>
          <button class="caret" aria-label="Mehr">${svgBox(5, 3, svg`<path d="M0 0 H5 L2.5 3Z" fill="#333"/>`)}</button>
          <button class="mini first" aria-label="Minimieren">${svgBox(10, 10, svg`<path d="M0 8 H10" stroke="#222" stroke-width="2"/>`)}</button>
          <button class="mini" aria-label="Maximieren">${svgBox(9, 10, svg`<path d="M.5 1.5 H8.5 V8.5 H.5Z" fill="none" stroke="#222" stroke-width="1.3"/>`)}</button>
          <button class="mini" aria-label="Schließen">${svgBox(10, 9, svg`<path d="M1 .5 L9 8.5 M9 .5 L1 8.5" stroke="#222" stroke-width="2"/>`)}</button>
        </div>
        <nav>
          ${TABS.map((t, i) => html`<a href="#" class=${i ? "" : "on"}>${t}</a>`)}
          <button class="more" aria-label="Weitere Register">${svgBox(9, 7, svg`<path d="M0 0 L4 3.5 L0 7Z M5 0 L9 3.5 L5 7Z" fill="#fff"/>`)}</button>
          <button class="pill" aria-label="Multifunktionsleiste">${svgBox(14, 7, svg`<rect width="14" height="7" rx="2" fill="#eef1f4"/><path d="M4.5 2 H9.5 L7 5Z" fill="#333"/>`)}</button>
          <button aria-label="Optionen">${svgBox(5, 4, svg`<path d="M0 0 H5 L2.5 3.5Z" fill="#dfe6ee"/>`)}</button>
        </nav>
      </div>

      <div class="doc">
        ${this.docked ? html`<dgm-palette class="side"></dgm-palette>` : nothing}
        <div class="view">
          <div class="canvas">${this.viewTools()}</div>
          <scroll-bar orient="vertical"></scroll-bar>
          <scroll-bar orient="horizontal"></scroll-bar>
          <div class="corner"></div>
        </div>
      </div>

      <div class="cmd">
        <div class="grip"><div class="dots"></div></div>
        <div class="line first">*Abbruch*</div>
        <div class="spin">${arrowTri("up")}${arrowTri("down")}</div>
        <div class="line">Befehl:</div>
        <scroll-bar orient="horizontal"></scroll-bar>
        <div class="rest"></div>
      </div>

      <div class="status">
        <span class="coord">${this.coords}</span>
        ${statusIcons.map((s, i) => html`<button class=${i === 7 || i === 8 ? "on" : ""} aria-label="Status ${i + 1}">${svgBox(22, 22, s)}</button>`)}
        <button class="cut" aria-label="Schnelleigenschaften">${svgBox(10, 22, svg`<path d="M5.5 3 V12 M1 6.5 H10 M8.5 9 V18" stroke="#222"/>`)}</button>
        <div class="tray">
          ${svgBox(16, 16, svg`<path d="M1 3 H5 L7 1 H13 L15 4 V13 H3 Z" fill="#35618f"/><path d="M3 3 h5 v4 h-5z" fill="#e8f2fa"/><path d="M1 9 H12 V14 H3 Z" fill="#f0cf2c"/><path d="M6 11 L9.5 14.5 L15.5 8.5" fill="none" stroke="#3a9c18" stroke-width="2.2"/>`)}
          ${svgBox(12, 16, svg`<path d="M6 .5 C10 .5 11.5 4 10 7 L8 10.5 H4 L2 7 C.5 4 2 .5 6 .5Z" fill="#ffe9a8" stroke="#b98c1c" stroke-width=".8"/><rect x="4" y="10.5" width="4" height="4.5" rx="1" fill="#ededed" stroke="#777" stroke-width=".8"/>`)}
        </div>
        <button class="drop" aria-label="Menü">${svgBox(6, 5, svg`<path d="M0 0 H6 L3 4.5Z" fill="#111"/>`)}</button>
        <button class="win" aria-label="Vollbild">${svgBox(14, 14, svg`<rect x=".5" y=".5" width="13" height="13" fill="#f5f5f5" stroke="#444"/><path d="M1 2.5 H13" stroke="#3a4048" stroke-width="3"/><path d="M7.5 2.5h4.5" stroke="#fff" stroke-dasharray="1 1"/>`)}</button>
        <span class="corner-grip">${svgBox(11, 11, svg`<path d="M8.5 .5h2v2h-2z M4.5 4.5h2v2h-2z M8.5 4.5h2v2h-2z M.5 8.5h2v2h-2z M4.5 8.5h2v2h-2z M8.5 8.5h2v2h-2z" fill="#d8d8cc"/>`)}</span>
      </div>
      <slot></slot>`;
  }
}

/* ---------- docking guides ---------- */

const guidePanel = (dir: "up" | "down" | "left" | "right") => {
  const horizontal = dir === "left" || dir === "right";
  const w = horizontal ? 24 : 21, h = horizontal ? 21 : 24;
  const part = { up: [1, 4, 19, 8], down: [1, 13, 19, 10], left: [1, 4, 10, 16], right: [12, 4, 11, 16] }[dir];
  const tri = { up: "M7 19 L10.5 15.5 L14 19Z", down: "M7 7 L14 7 L10.5 10.5Z", left: "M20 8 L16 11.5 L20 15Z", right: "M5 8 L9 11.5 L5 15Z" }[dir];
  const dots = horizontal ? "M11.5 4 V20" : "M1.5 12.5 H20";
  return svgBox(w, h, svg`<rect x=".75" y=".75" width=${w - 1.5} height=${h - 1.5} fill="#fff"/>
    <rect x=${part[0]} y=${part[1]} width=${part[2]} height=${part[3]} fill="#c6d8ee"/><rect x="1" y="1" width=${w - 2} height="2" fill="#4c7fd4"/>
    <rect x=".75" y=".75" width=${w - 1.5} height=${h - 1.5} fill="none" stroke="#4a45a8" stroke-width="1.5"/>
    <path d=${dots} stroke="#3a3aa0" stroke-dasharray="1 1"/><path d=${tri} fill="#3f3cae"/>`);
};

const cursor = svg`
  <path d="M22 17 V34 L26 30.5 L29 36.5 L32 35 L29 29.5 H34 Z" fill="#0000004d"/>
  <path d="M21 15.5 V31.5 L24.5 28.5 L27.5 34.5 L30.5 33 L27.7 27.5 H32.5 Z" fill="#fff" stroke="#2b2b55" stroke-width="1.1"/>`;

const ring = svgBox(56, 56, svg`<circle cx="27.5" cy="27.5" r="22.5" fill="none" stroke="#00000030" stroke-width="6"/><circle cx="27" cy="27" r="22.5" fill="none" stroke="#00000040" stroke-width="4"/>
  <circle cx="25" cy="25" r="22.5" fill="none" stroke="#c00000" stroke-width="4"/>${cursor}`);

@customElement("app-root")
class AppRoot extends LitElement {
  static styles = [reset, css`
    :host { display: grid; grid-template-columns: 600fr 33px 601fr; min-height: 100vh; background: #fff; position: relative; }
    .float { position: absolute; left: 265px; top: 72px; width: 244px; height: 367px; }
    .preview { position: absolute; left: 5px; top: 53px; bottom: 65px; width: 235px; background: rgba(86, 158, 244, 0.5); border-left: 1px solid #4a7fc0; }
    .guide { position: absolute; display: grid; place-items: center; background: #d9d9d9; border: 1px solid #a9a9a9; }
    .tall { width: 29px; height: 32px; } .wide { width: 32px; height: 29px; }
    .g-top { left: 285px; top: 68px; } .g-bottom { left: 285px; top: 432px; } .g-right { left: 547px; top: 252px; }
    .g-left { left: 20px; top: 252px; opacity: 0.6; background: #86b2ec; border-color: #1f62d0; }
    .g-left svg { opacity: 0.5; }
    .star { position: absolute; left: 255px; top: 222px; }
    .g-star { position: absolute; }
    .g-star.u { left: 34px; top: 5px; } .g-star.d { left: 34px; top: 61px; } .g-star.l { left: 5px; top: 34px; } .g-star.r { left: 61px; top: 34px; }
    .ring { position: absolute; }
    .r1 { left: 362px; top: 66px; } .r2 { left: 10px; top: 243px; }
    .arrow { align-self: start; margin: 164px -34px 0; z-index: 2; }
  `];
  render() {
    return html`
      <cad-window coords="453915.3749, 4098927.6062, 0.0000">
        <dgm-palette class="float" floating></dgm-palette>
        <div class="preview"></div>
        <div class="guide wide g-left">${guidePanel("left")}</div>
        <div class="guide tall g-top">${guidePanel("up")}</div>
        <div class="guide tall g-bottom">${guidePanel("down")}</div>
        <div class="guide wide g-right">${guidePanel("right")}</div>
        <div class="star">
          ${svgBox(90, 90, svg`<path d="M30.5 .5 H59.5 V24 L66 30.5 H89.5 V59.5 H66 L59.5 66 V89.5 H30.5 V66 L24 59.5 H.5 V30.5 H24 L30.5 24 Z" fill="#dadada" stroke="#a9a9a9"/>`)}
          <div class="g-star u">${guidePanel("up")}</div><div class="g-star d">${guidePanel("down")}</div>
          <div class="g-star l">${guidePanel("left")}</div><div class="g-star r">${guidePanel("right")}</div>
        </div>
        <div class="ring r1">${ring}</div>
        <div class="ring r2">${ring}</div>
      </cad-window>
      <div class="arrow">${svgBox(62, 26, svg`<path d="M3 13.5 H42 M42 4 L61 13.5 L42 23Z" fill="#00000038" stroke="#00000028" stroke-width="3"/>
        <path d="M1 11.5 H42" stroke="#cc1417" stroke-width="3"/><path d="M40 2 L59 11.5 L40 21Z" fill="#cc1417"/>`)}</div>
      <cad-window docked coords="458700.3952, 4098059.9471, 0.0000"></cad-window>`;
  }
}
